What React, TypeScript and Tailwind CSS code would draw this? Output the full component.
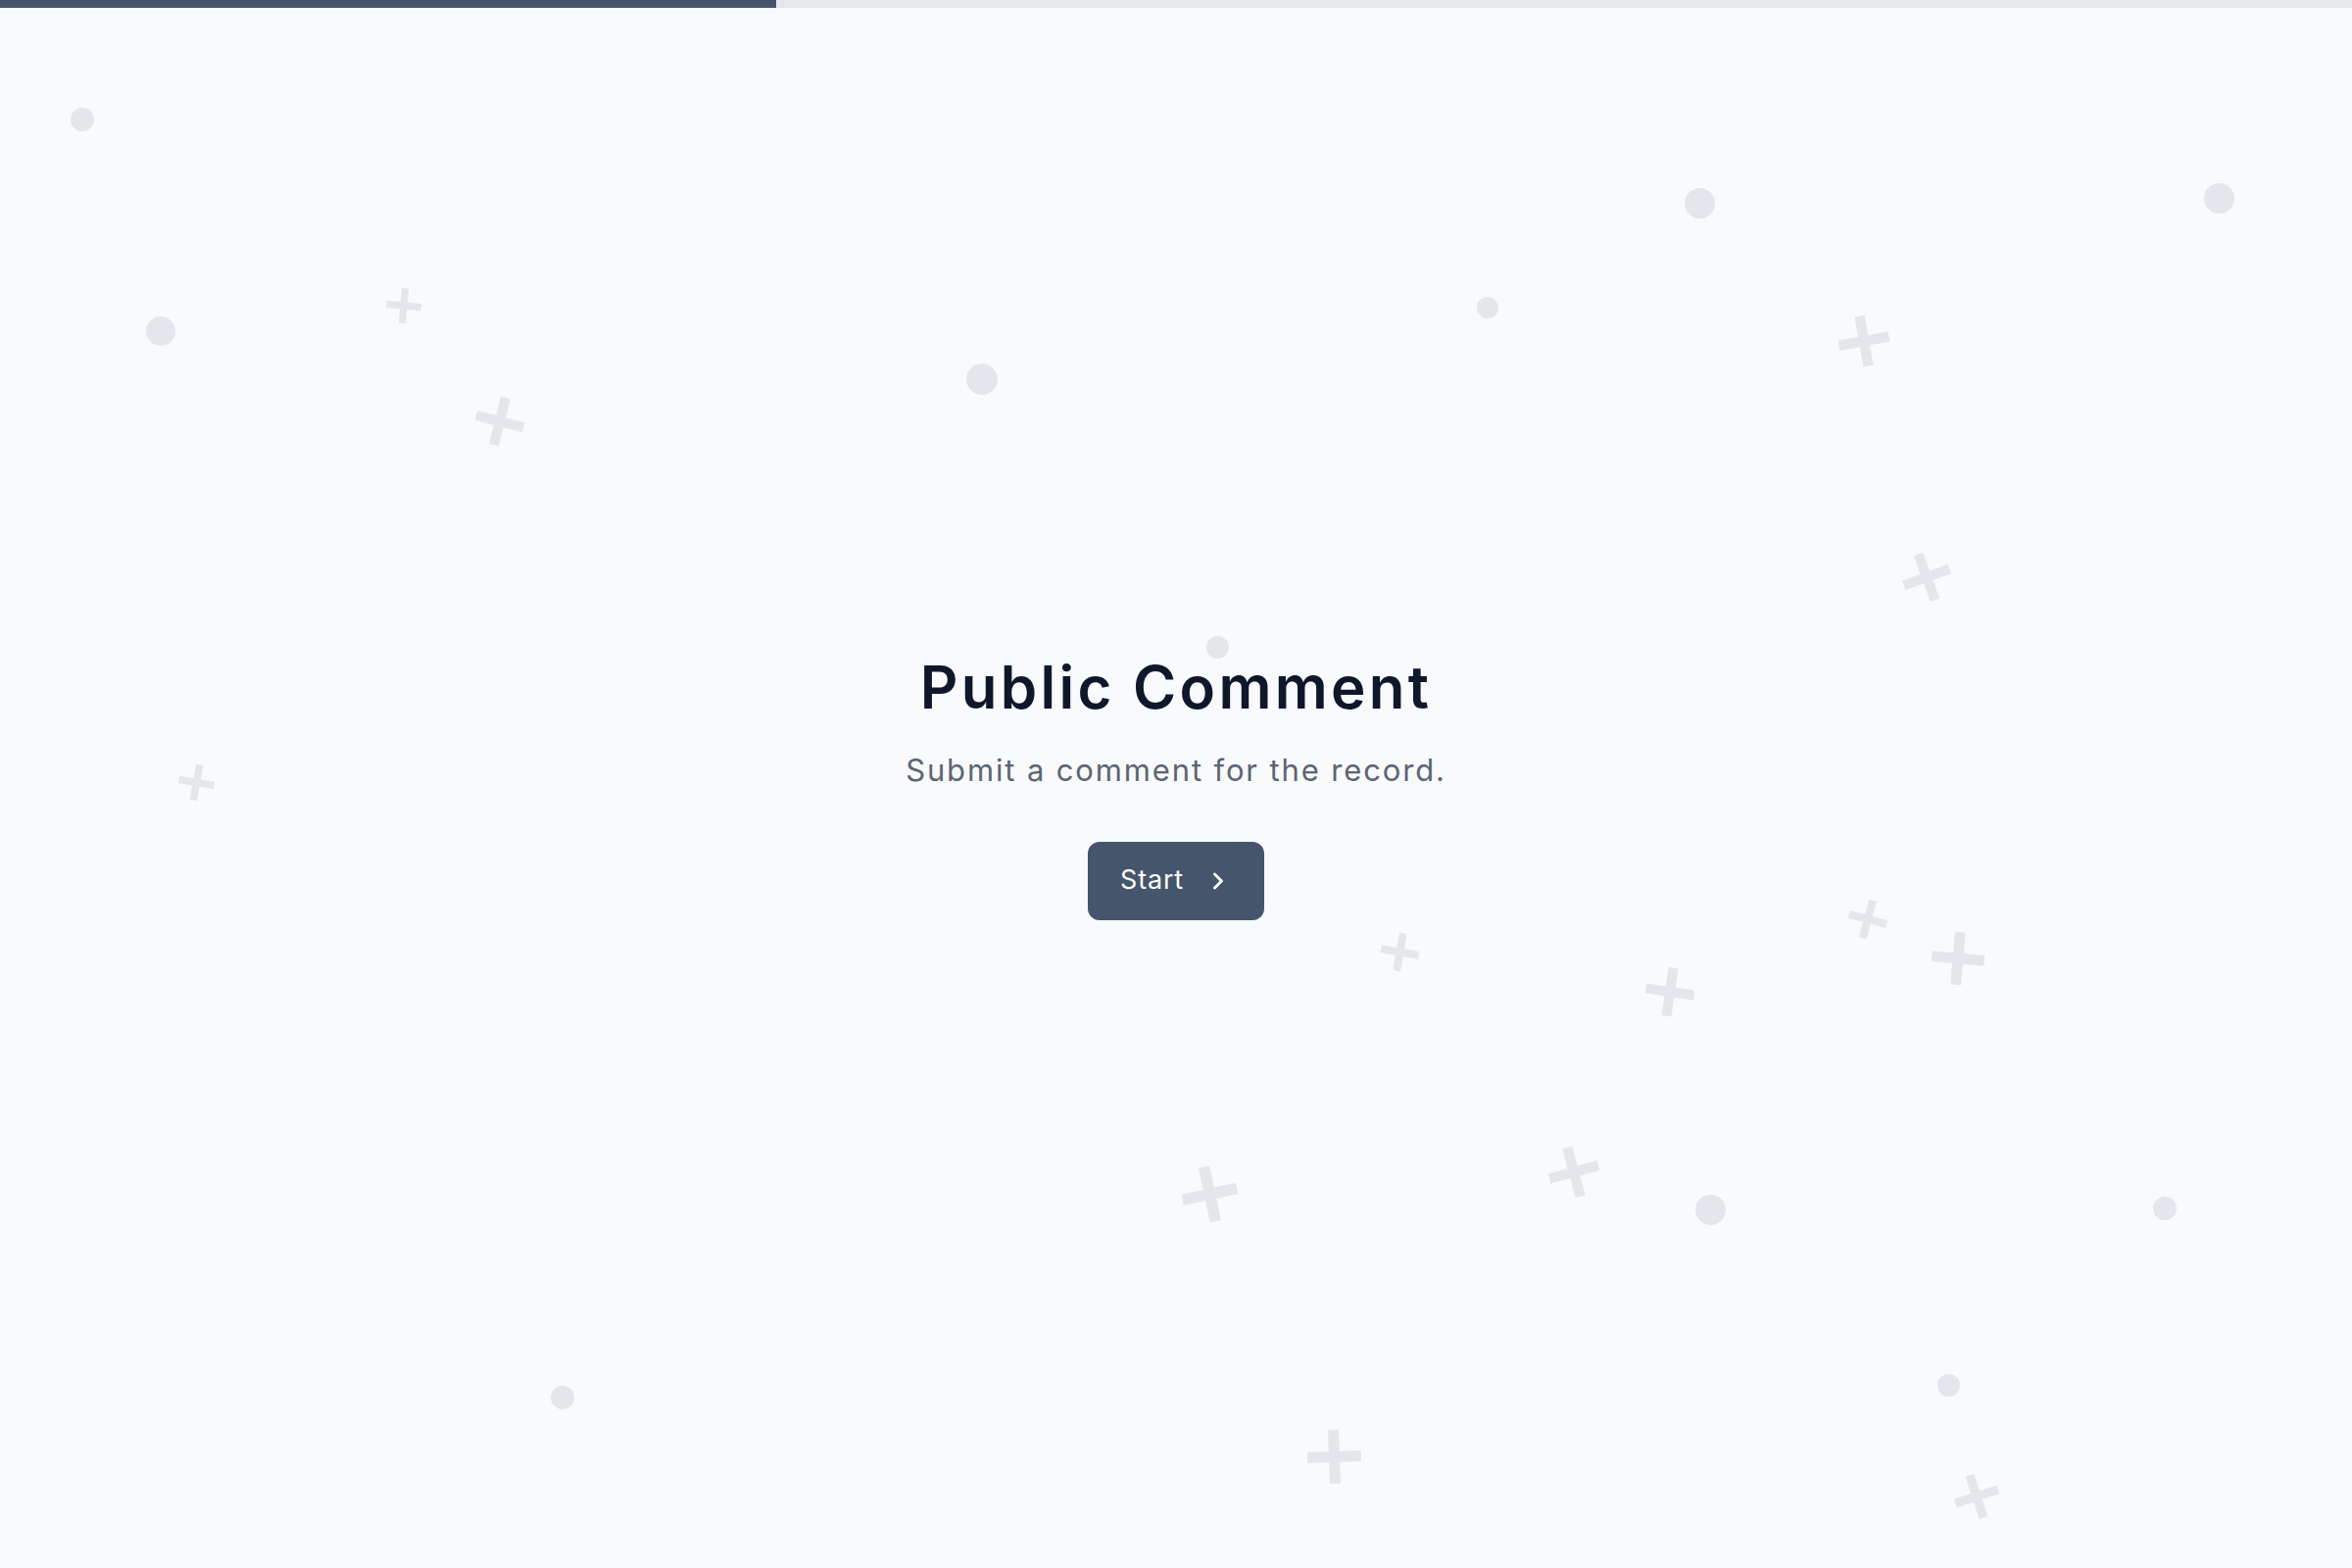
import { ChevronRight } from "lucide-react";

type Dot = { x: number; y: number; d: number };
type Plus = { x: number; y: number; s: number; r: number };

// centres in page pixels
const dots: Dot[] = [
  { x: 84, y: 122, d: 24 },
  { x: 164, y: 338, d: 30 },
  { x: 1002, y: 387, d: 32 },
  { x: 1518, y: 314, d: 22 },
  { x: 1734, y: 207, d: 31 },
  { x: 2264, y: 202, d: 31 },
  { x: 1242, y: 660, d: 23 },
  { x: 1745, y: 1234, d: 31 },
  { x: 2209, y: 1233, d: 24 },
  { x: 1988, y: 1413, d: 23 },
  { x: 574, y: 1426, d: 24 },
];

const pluses: Plus[] = [
  { x: 412, y: 312, s: 36, r: 5 },
  { x: 510, y: 430, s: 50, r: 14 },
  { x: 1902, y: 348, s: 52, r: -10 },
  { x: 1966, y: 589, s: 50, r: -20 },
  { x: 200, y: 798, s: 37, r: 10 },
  { x: 1428, y: 971, s: 39, r: 10 },
  { x: 1906, y: 938, s: 40, r: 15 },
  { x: 1998, y: 978, s: 54, r: 5 },
  { x: 1704, y: 1012, s: 50, r: 8 },
  { x: 1234, y: 1218, s: 57, r: -12 },
  { x: 1606, y: 1196, s: 52, r: -15 },
  { x: 1361, y: 1486, s: 55, r: -2 },
  { x: 2017, y: 1527, s: 46, r: -18 },
];

function Decorations() {
  return (
    <div className="pointer-events-none absolute inset-0">
      {dots.map((dot, i) => (
        <div
          key={`d${i}`}
          className="absolute rounded-full bg-[#e3e7eb]"
          style={{
            left: dot.x - dot.d / 2,
            top: dot.y - dot.d / 2,
            width: dot.d,
            height: dot.d,
          }}
        />
      ))}
      {pluses.map((p, i) => (
        <svg
          key={`p${i}`}
          viewBox="0 0 24 24"
          className="absolute fill-[#e3e7eb]"
          style={{
            left: p.x - p.s / 2,
            top: p.y - p.s / 2,
            width: p.s,
            height: p.s,
            transform: `rotate(${p.r}deg)`,
          }}
        >
          <rect x="9.6" y="0" width="4.8" height="24" />
          <rect x="0" y="9.6" width="24" height="4.8" />
        </svg>
      ))}
    </div>
  );
}

export default function App() {
  return (
    <div
      className="relative flex min-h-screen flex-col overflow-hidden bg-[#f8fafc]"
      style={{ fontFamily: "Inter, 'Noto Sans', sans-serif" }}
    >
      <div className="h-2 w-full bg-gray-200">
        <div className="h-full w-[33%] bg-slate-600" />
      </div>

      <Decorations />

      <main className="relative flex flex-1 flex-col items-center justify-center pb-[5px]">
        <h1 className="text-[60px] leading-[72px] font-semibold tracking-[0.055em] text-slate-900">
          Public Comment
        </h1>
        <p className="mt-[29px] text-[31px] leading-[40px] tracking-[0.06em] text-[#5c6574]">
          Submit a comment for the record.
        </p>
        <button className="mt-[53px] flex h-[80px] w-[180px] items-center gap-[21px] rounded-[12px] bg-slate-600 pl-[33px] text-[27px] tracking-[0.03em] text-white">
          <span>Start</span>
          <ChevronRight size={28} strokeWidth={2.5} />
        </button>
      </main>
    </div>
  );
}
